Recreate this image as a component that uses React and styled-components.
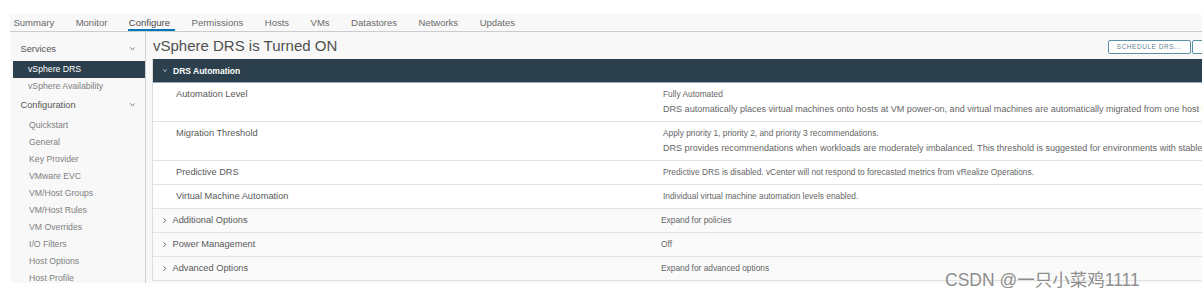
import React from 'react';
import styled, { createGlobalStyle } from 'styled-components';

const GlobalStyle = createGlobalStyle`
	body {
		margin: 0;
		overflow: hidden;
		background: #ffffff;
		font-family: 'Liberation Sans', Arial, sans-serif;
	}
`;

const tabs = ['Summary', 'Monitor', 'Configure', 'Permissions', 'Hosts', 'VMs', 'Datastores', 'Networks', 'Updates'];

const services = ['vSphere DRS', 'vSphere Availability'];
const configuration = [
	'Quickstart',
	'General',
	'Key Provider',
	'VMware EVC',
	'VM/Host Groups',
	'VM/Host Rules',
	'VM Overrides',
	'I/O Filters',
	'Host Options',
	'Host Profile',
];

const drsRows = [
	{
		label: 'Automation Level',
		value: 'Fully Automated',
		detail:
			'DRS automatically places virtual machines onto hosts at VM power-on, and virtual machines are automatically migrated from one host to another to optimize resource utilization.',
	},
	{
		label: 'Migration Threshold',
		value: 'Apply priority 1, priority 2, and priority 3 recommendations.',
		detail:
			'DRS provides recommendations when workloads are moderately imbalanced. This threshold is suggested for environments with stable workloads. (Default)',
	},
	{
		label: 'Predictive DRS',
		value: 'Predictive DRS is disabled. vCenter will not respond to forecasted metrics from vRealize Operations.',
	},
	{
		label: 'Virtual Machine Automation',
		value: 'Individual virtual machine automation levels enabled.',
	},
];

const groups = [
	{ label: 'Additional Options', value: 'Expand for policies' },
	{ label: 'Power Management', value: 'Off' },
	{ label: 'Advanced Options', value: 'Expand for advanced options' },
];

function ChevronDown({ w = 5, h = 3.5 }) {
	return (
		<svg width={w} height={h} viewBox='0 0 5 3.5'>
			<polyline points='0.4,0.4 2.5,3 4.6,0.4' fill='none' stroke='currentColor' strokeWidth='0.9' />
		</svg>
	);
}

function ChevronRight() {
	return (
		<svg width='3.5' height='5' viewBox='0 0 3.5 5'>
			<polyline points='0.4,0.4 3,2.5 0.4,4.6' fill='none' stroke='currentColor' strokeWidth='0.9' />
		</svg>
	);
}

export default function App() {
	return (
		<React.Fragment>
			<GlobalStyle />
			<Page>
				<TabBar>
					{tabs.map((t) => (
						<Tab key={t} $active={t === 'Configure'}>
							{t}
						</Tab>
					))}
				</TabBar>
				<Body>
					<Sidebar>
						<GroupHeader>
							<span>Services</span>
							<ChevronDown />
						</GroupHeader>
						{services.map((s) => (
							<NavItem key={s} $indent={15} $selected={s === 'vSphere DRS'}>
								{s}
							</NavItem>
						))}
						<GroupHeader>
							<span>Configuration</span>
							<ChevronDown />
						</GroupHeader>
						{configuration.map((s) => (
							<NavItem key={s} $indent={16}>
								{s}
							</NavItem>
						))}
					</Sidebar>
					<Main>
						<TitleBar>
							<Title>vSphere DRS is Turned ON</Title>
							<ButtonGroup>
								<Button $width={83}>SCHEDULE DRS...</Button>
								<Button $width={60}>EDIT...</Button>
							</ButtonGroup>
						</TitleBar>
						<Panel>
							<PanelHeader>
								<ChevronDown w={4} h={3} />
								<span>DRS Automation</span>
							</PanelHeader>
							{drsRows.map((r) => (
								<Row key={r.label}>
									<Label $pad={23}>{r.label}</Label>
									<div>
										<Value>{r.value}</Value>
										{r.detail && <Detail>{r.detail}</Detail>}
									</div>
								</Row>
							))}
							{groups.map((g) => (
								<Row key={g.label} $group>
									<Label $pad={10}>
										<ChevronRight />
										<span>{g.label}</span>
									</Label>
									<Value>{g.value}</Value>
								</Row>
							))}
						</Panel>
					</Main>
				</Body>
				<Watermark>CSDN @一只小菜鸡1111</Watermark>
			</Page>
		</React.Fragment>
	);
}

const Page = styled.div`
	position: relative;
	width: 1260px;
	height: 294px;
	padding: 14px 0 0 10px;
	box-sizing: border-box;
	overflow: hidden;
`;

const TabBar = styled.div`
	display: flex;
	gap: 21.5px;
	height: 17px;
	padding-left: 3.5px;
	background: #f8f8f8;
	border-bottom: 1px solid #cccccc;
`;

const Tab = styled.div`
	position: relative;
	display: flex;
	align-items: center;
	font-size: 9.5px;
	color: ${(p) => (p.$active ? '#4a4a4a' : '#6a6a6a')};

	&::after {
		content: '';
		display: ${(p) => (p.$active ? 'block' : 'none')};
		position: absolute;
		left: -1px;
		right: -5px;
		bottom: 0;
		height: 2px;
		background: #0079b8;
	}
`;

const Body = styled.div`
	display: flex;
	height: 251px;
	background: #f8f8f8;
`;

const Sidebar = styled.div`
	width: 135px;
	flex-shrink: 0;
	padding-top: 7px;
	border-right: 1px solid #d0d0d0;
	overflow: hidden;
`;

const GroupHeader = styled.div`
	display: flex;
	align-items: center;
	justify-content: space-between;
	height: 20px;
	margin-bottom: 2px;
	padding: 0 10px 0 10.5px;
	font-size: 9.25px;
	color: #555555;

	svg {
		color: #777777;
	}
`;

const NavItem = styled.div`
	height: 17px;
	line-height: 17px;
	margin-left: 3px;
	padding-left: ${(p) => p.$indent}px;
	font-size: 8.7px;
	white-space: nowrap;
	color: ${(p) => (p.$selected ? '#ffffff' : '#808080')};
	background: ${(p) => (p.$selected ? '#2b3f4c' : 'transparent')};
`;

const Main = styled.div`
	flex: 1;
	min-width: 0;
	padding-left: 6px;
	display: flex;
	flex-direction: column;
`;

const TitleBar = styled.div`
	display: flex;
	align-items: center;
	justify-content: space-between;
	height: 27px;
	padding: 0 8px 0 1px;
`;

const Title = styled.h1`
	margin: 0;
	font-size: 15px;
	font-weight: normal;
	color: #4f4f4f;
`;

const ButtonGroup = styled.div`
	display: flex;
	gap: 1.5px;
	margin-top: 2px;
`;

const Button = styled.button`
	width: ${(p) => p.$width}px;
	height: 14px;
	padding: 0;
	border: 1px solid #5b8fa3;
	border-radius: 2px;
	background: #ffffff;
	font-family: 'Liberation Sans', Arial, sans-serif;
	font-size: 6.4px;
	letter-spacing: 0.6px;
	color: #5f7f8e;
`;

const Panel = styled.div`
	border-left: 1px solid #dddddd;
	background: #ffffff;
`;

const PanelHeader = styled.div`
	display: flex;
	align-items: center;
	gap: 6px;
	height: 23px;
	padding-left: 10px;
	background: #2b3f4c;
	border-bottom: 1px solid #8eaabb;
	color: #ffffff;
	font-size: 8.5px;
	font-weight: bold;
`;

const Row = styled.div`
	display: grid;
	grid-template-columns: ${(p) => (p.$group ? '508px' : '510px')} 1fr;
	padding: 4px 0;
	line-height: 15px;
	background: ${(p) => (p.$group ? '#fafafa' : '#ffffff')};
	border-bottom: 1px solid #e2e2e2;
`;

const Label = styled.div`
	display: flex;
	align-items: center;
	align-self: start;
	gap: 6px;
	height: 15px;
	padding-left: ${(p) => p.$pad}px;
	font-size: 9.25px;
	color: #595959;

	svg {
		color: #666666;
	}
`;

const Value = styled.div`
	font-size: 8.35px;
	color: #666666;
	white-space: nowrap;
	overflow: hidden;
`;

const Detail = styled(Value)`
	font-size: 9.05px;
`;

const Watermark = styled.div`
	position: absolute;
	left: 945px;
	top: 266px;
	font-family: 'Liberation Sans', 'Noto Sans CJK SC', sans-serif;
	font-size: 17.5px;
	color: rgba(110, 110, 110, 0.8);
	text-shadow: 0 0 1px rgba(255, 255, 255, 0.8);
	white-space: nowrap;
`;
